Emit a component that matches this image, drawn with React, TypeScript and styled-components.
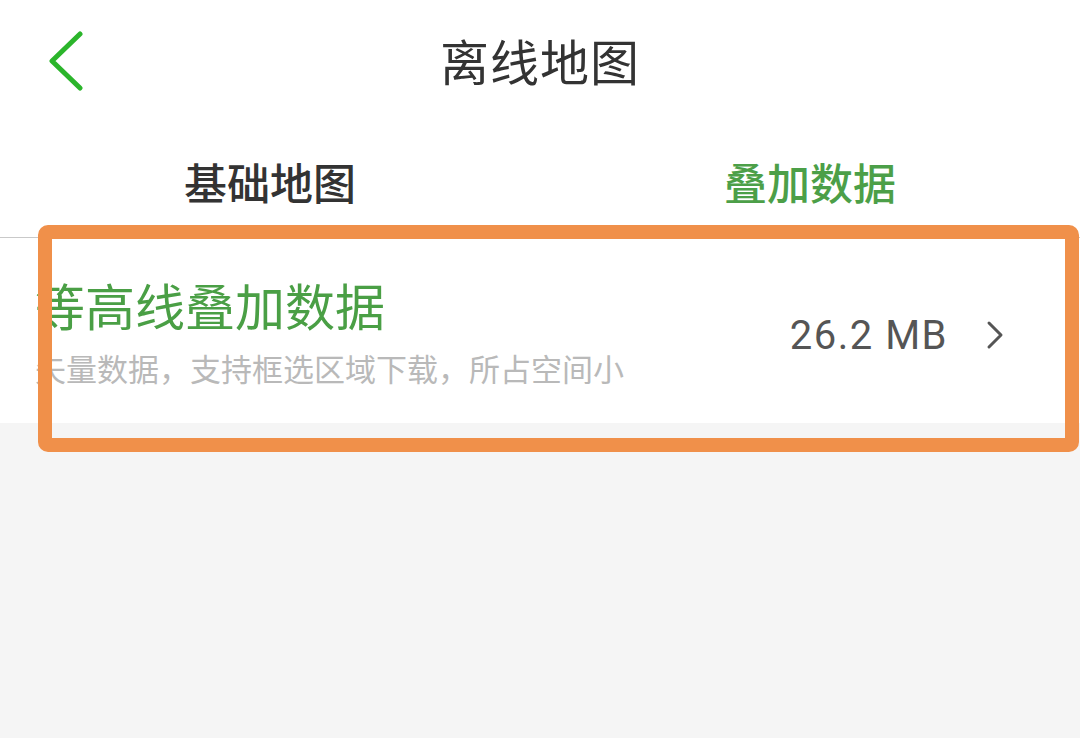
import React from 'react'
import styled, { createGlobalStyle } from 'styled-components'

const GlobalStyle = createGlobalStyle`
    html, body {
        margin: 0;
        padding: 0;
        background: #f5f5f5;
    }
    body {
        font-family: "Noto Sans CJK SC", "Noto Sans", sans-serif;
    }
`

type Tab = { label: string; active?: boolean }

const tabs: Tab[] = [
    { label: '基础地图' },
    { label: '叠加数据', active: true },
]

const App = () => {
    return (
        <>
            <GlobalStyle />
            <Page>
                <TopArea>
                    <Header>
                        <BackButton aria-label="返回">
                            <svg width="36" height="60" viewBox="0 0 36 60" fill="none">
                                <path d="M32 3 L4 30 L32 57" stroke="#2bb52b" strokeWidth="5" strokeLinecap="round" strokeLinejoin="round" />
                            </svg>
                        </BackButton>
                        <Title>离线地图</Title>
                        <span />
                    </Header>
                    <TabBar>
                        {tabs.map(tab => (
                            <TabItem key={tab.label} active={tab.active}>{tab.label}</TabItem>
                        ))}
                    </TabBar>
                    <ListItem>
                        <ItemText>
                            <ItemTitle>等高线叠加数据</ItemTitle>
                            <ItemDesc>矢量数据，支持框选区域下载，所占空间小</ItemDesc>
                        </ItemText>
                        <ItemMeta>
                            <ItemSize>26.2 MB</ItemSize>
                            <svg width="22" height="30" viewBox="0 0 22 30" fill="none">
                                <path d="M5 3 L17 15 L5 27" stroke="#555" strokeWidth="3" strokeLinecap="round" strokeLinejoin="round" />
                            </svg>
                        </ItemMeta>
                    </ListItem>
                </TopArea>
                <Highlight />
            </Page>
        </>
    )
}

const Page = styled.div`
    position: relative;
    width: 1080px;
    height: 738px;
    overflow: hidden;
    background: #f5f5f5;
`

const TopArea = styled.div`
    background: #fff;
`

const Header = styled.header`
    display: grid;
    grid-template-columns: 1fr auto 1fr;
    align-items: center;
    height: 128px;
`

const BackButton = styled.button`
    justify-self: start;
    display: flex;
    align-items: center;
    margin: 0 0 6px 48px;
    padding: 0;
    border: none;
    background: none;
`

const Title = styled.h1`
    margin: 0 0 10px;
    font-size: 49px;
    font-weight: 400;
    color: #333;
    letter-spacing: 1px;
`

const TabBar = styled.nav`
    display: grid;
    grid-template-columns: 1fr 1fr;
    height: 109px;
    border-bottom: 1px solid #c9c9c9;
`

const TabItem = styled.div<{ active?: boolean }>`
    display: flex;
    align-items: center;
    justify-content: center;
    padding-bottom: 4px;
    font-size: 43px;
    font-weight: 500;
    color: ${({ active }) => (active ? '#4c9f48' : '#333')};
`

const ListItem = styled.div`
    display: flex;
    align-items: center;
    justify-content: space-between;
    height: 185px;
    box-sizing: border-box;
    padding: 0 74px 0 35px;
`

const ItemText = styled.div`
    display: flex;
    flex-direction: column;
`

const ItemTitle = styled.div`
    font-size: 50px;
    line-height: 56px;
    color: #4a9f45;
`

const ItemDesc = styled.div`
    margin-top: 18px;
    font-size: 31px;
    line-height: 36px;
    color: #b9b9b9;
`

const ItemMeta = styled.div`
    display: flex;
    align-items: center;
    gap: 36px;
    margin-top: 9px;
`

const ItemSize = styled.span`
    font-family: Roboto, "Noto Sans", sans-serif;
    font-size: 40px;
    letter-spacing: 1.5px;
    color: #555;
`

const Highlight = styled.div`
    position: absolute;
    left: 38px;
    top: 225px;
    width: 1041px;
    height: 227px;
    box-sizing: border-box;
    border: 14px solid #f0904a;
    border-radius: 10px;
    pointer-events: none;
`

export default App
